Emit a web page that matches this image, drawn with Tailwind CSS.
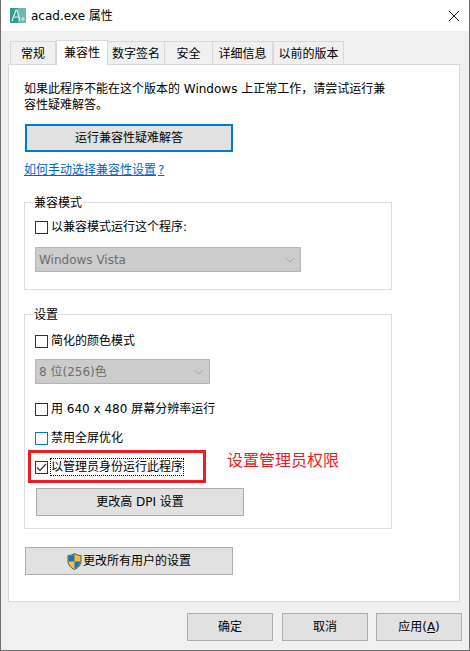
<!DOCTYPE html>
<html lang="zh-CN">
<head>
    <meta charset="UTF-8">
    <title>acad.exe 属性</title>
    <script src="https://cdn.jsdelivr.net/npm/@tailwindcss/browser@4"></script>
</head>
<body class="bg-white">
    <div class="relative w-[470px] h-[651px] flex flex-col overflow-hidden bg-[#f0f0f0] border-l border-r border-b border-[#6f6f6f] text-[12px] leading-[16px] text-black font-['DejaVu_Sans','Noto_Sans_CJK_SC',sans-serif]">
        <!-- title bar -->
        <div class="h-[31px] shrink-0 bg-white flex items-center pl-[9px] pr-[8px]">
            <svg width="16" height="15" viewBox="0 0 16 15" class="shrink-0">
                <rect width="16" height="15" fill="#2f9c8f"/>
                <rect x="8" width="8" height="15" fill="#6fb8ae"/>
                <path d="M2 13 L6 2 L7 2 L10 13 M4 9 H9" fill="none" stroke="#e4f3f0" stroke-width="1.2"/>
                <path d="M11 11 H15 M13 9 V13" stroke="#d5ece8" stroke-width="1"/>
            </svg>
            <span class="ml-[5px]">acad.exe 属性</span>
            <svg width="12" height="12" viewBox="0 0 12 12" class="ml-auto mr-[1px]">
                <path d="M1 1 L11 11 M11 1 L1 11" stroke="#111" stroke-width="1"/>
            </svg>
        </div>

        <!-- tabs -->
        <div class="h-[34px] shrink-0 flex items-end pl-[9px] relative z-10">
            <div class="w-[46px] h-[23px] mb-px pt-px flex items-center justify-center bg-[#f0f0f0] border border-b-0 border-[#d9d9d9]">常规</div>
            <div class="w-[52px] h-[25px] flex items-center justify-center bg-white border border-b-0 border-[#d9d9d9]">兼容性</div>
            <div class="w-[57px] h-[23px] mb-px pt-px flex items-center justify-center bg-[#f0f0f0] border border-b-0 border-l-0 border-[#d9d9d9]">数字签名</div>
            <div class="w-[48px] h-[23px] mb-px pt-px flex items-center justify-center bg-[#f0f0f0] border border-b-0 border-l-0 border-[#d9d9d9]">安全</div>
            <div class="w-[60px] h-[23px] mb-px pt-px flex items-center justify-center bg-[#f0f0f0] border border-b-0 border-l-0 border-[#d9d9d9]">详细信息</div>
            <div class="w-[71px] h-[23px] mb-px pt-px flex items-center justify-center bg-[#f0f0f0] border border-b-0 border-[#d9d9d9]">以前的版本</div>
        </div>

        <!-- panel -->
        <div class="ml-[7px] -mt-px w-[452px] h-[538px] shrink-0 bg-white border border-[#d9d9d9] pl-[15px] pt-[16px]">
            <p>如果此程序不能在这个版本的 Windows 上正常工作，请尝试运行兼<br>容性疑难解答。</p>
            <button class="mt-[11px] ml-px w-[208px] h-[28px] block bg-[#e1e1e1] border-2 border-[#0078d7]">运行兼容性疑难解答</button>
            <a class="mt-[10px] block w-fit text-[#0066cc] underline">如何手动选择兼容性设置<span class="pl-[2px]">?</span></a>

            <div class="relative mt-[24px] w-[368px] h-[88px] border border-[#dcdcdc] pl-[10px] pt-[16px]">
                <span class="absolute left-[8px] -top-[8px] bg-white px-px">兼容模式</span>
                <div class="flex items-center gap-[3px]">
                    <span class="w-[13px] h-[13px] border border-[#333]"></span>
                    <span>以兼容模式运行这个程序:</span>
                </div>
                <div class="mt-[12px] w-[266px] h-[25px] flex items-center justify-between bg-[#cccccc] border border-[#b5b5b5] pl-[3px] pr-[5px] text-[#6d6d6d]">
                    <span>Windows Vista</span>
                    <svg width="10" height="6" viewBox="0 0 10 6"><path d="M1 1 L5 5 L9 1" fill="none" stroke="#a8a8a8"/></svg>
                </div>
            </div>

            <div class="relative mt-[24px] w-[368px] h-[215px] border border-[#dcdcdc] pl-[10px] pt-[18px]">
                <span class="absolute left-[8px] -top-[8px] bg-white px-px">设置</span>
                <div class="flex items-center gap-[3px]">
                    <span class="w-[13px] h-[13px] border border-[#333]"></span>
                    <span>简化的颜色模式</span>
                </div>
                <div class="mt-[10px] w-[175px] h-[25px] flex items-center justify-between bg-[#cccccc] border border-[#b5b5b5] pl-[3px] pr-[5px] text-[#6d6d6d]">
                    <span>8 位(256)色</span>
                    <svg width="10" height="6" viewBox="0 0 10 6"><path d="M1 1 L5 5 L9 1" fill="none" stroke="#a8a8a8"/></svg>
                </div>
                <div class="mt-[17px] flex items-center gap-[3px]">
                    <span class="w-[13px] h-[13px] border border-[#333]"></span>
                    <span>用 640 x 480 屏幕分辨率运行</span>
                </div>
                <div class="mt-[13px] flex items-center gap-[3px]">
                    <span class="w-[13px] h-[13px] border border-[#0078d7]"></span>
                    <span>禁用全屏优化</span>
                </div>
                <div class="mt-[13px] flex items-center gap-[2px]">
                    <span class="w-[13px] h-[13px] border border-[#333] flex items-center justify-center">
                        <svg width="11" height="11" viewBox="0 0 11 11"><path d="M1 5.5 L4 8.5 L10 2" fill="none" stroke="#333" stroke-width="1.2"/></svg>
                    </span>
                    <span class="border border-dotted border-black -my-px">以管理员身份运行此程序</span>
                </div>
                <button class="mt-[13px] ml-px w-[208px] h-[28px] block bg-[#e1e1e1] border border-[#adadad]">更改高 DPI 设置</button>
            </div>

            <button class="mt-[18px] ml-px w-[208px] h-[28px] flex items-center justify-center bg-[#e1e1e1] border border-[#adadad]">
                <svg width="15" height="17" viewBox="0 0 15 17" class="mr-px">
                    <path d="M7.5 .5 C5.5 2 3 2.5 1 2.5 V8 C1 12 4 15 7.5 16.5 C11 15 14 12 14 8 V2.5 C12 2.5 9.5 2 7.5 .5 Z" fill="#f5c131" stroke="#4a5560"/>
                    <path d="M7.5 1.2 C5.6 2.5 3.5 3 1.6 3 V8.5 H7.5 Z" fill="#1f6fc0"/>
                    <path d="M7.5 8.5 H13.4 C12.9 11.8 10.5 14.3 7.5 15.8 Z" fill="#1f6fc0"/>
                </svg>
                <span>更改所有用户的设置</span>
            </button>
        </div>

        <!-- dialog buttons -->
        <div class="mt-[11px] flex pl-[186px]">
            <button class="w-[86px] h-[28px] bg-[#e1e1e1] border border-[#adadad]">确定</button>
            <button class="ml-[9px] w-[86px] h-[28px] bg-[#e1e1e1] border border-[#adadad]">取消</button>
            <button class="ml-[8px] w-[86px] h-[28px] bg-[#e1e1e1] border border-[#adadad]">应用(<span class="underline">A</span>)</button>
        </div>

        <!-- red annotation drawn over the dialog -->
        <div class="absolute left-[27px] top-[450px] w-[178px] h-[33px] border-[3px] border-[#ed1c24]"></div>
        <span class="absolute left-[226px] top-[451px] text-[16px] leading-[20px] text-[#ed1c24]">设置管理员权限</span>
    </div>
</body>
</html>
